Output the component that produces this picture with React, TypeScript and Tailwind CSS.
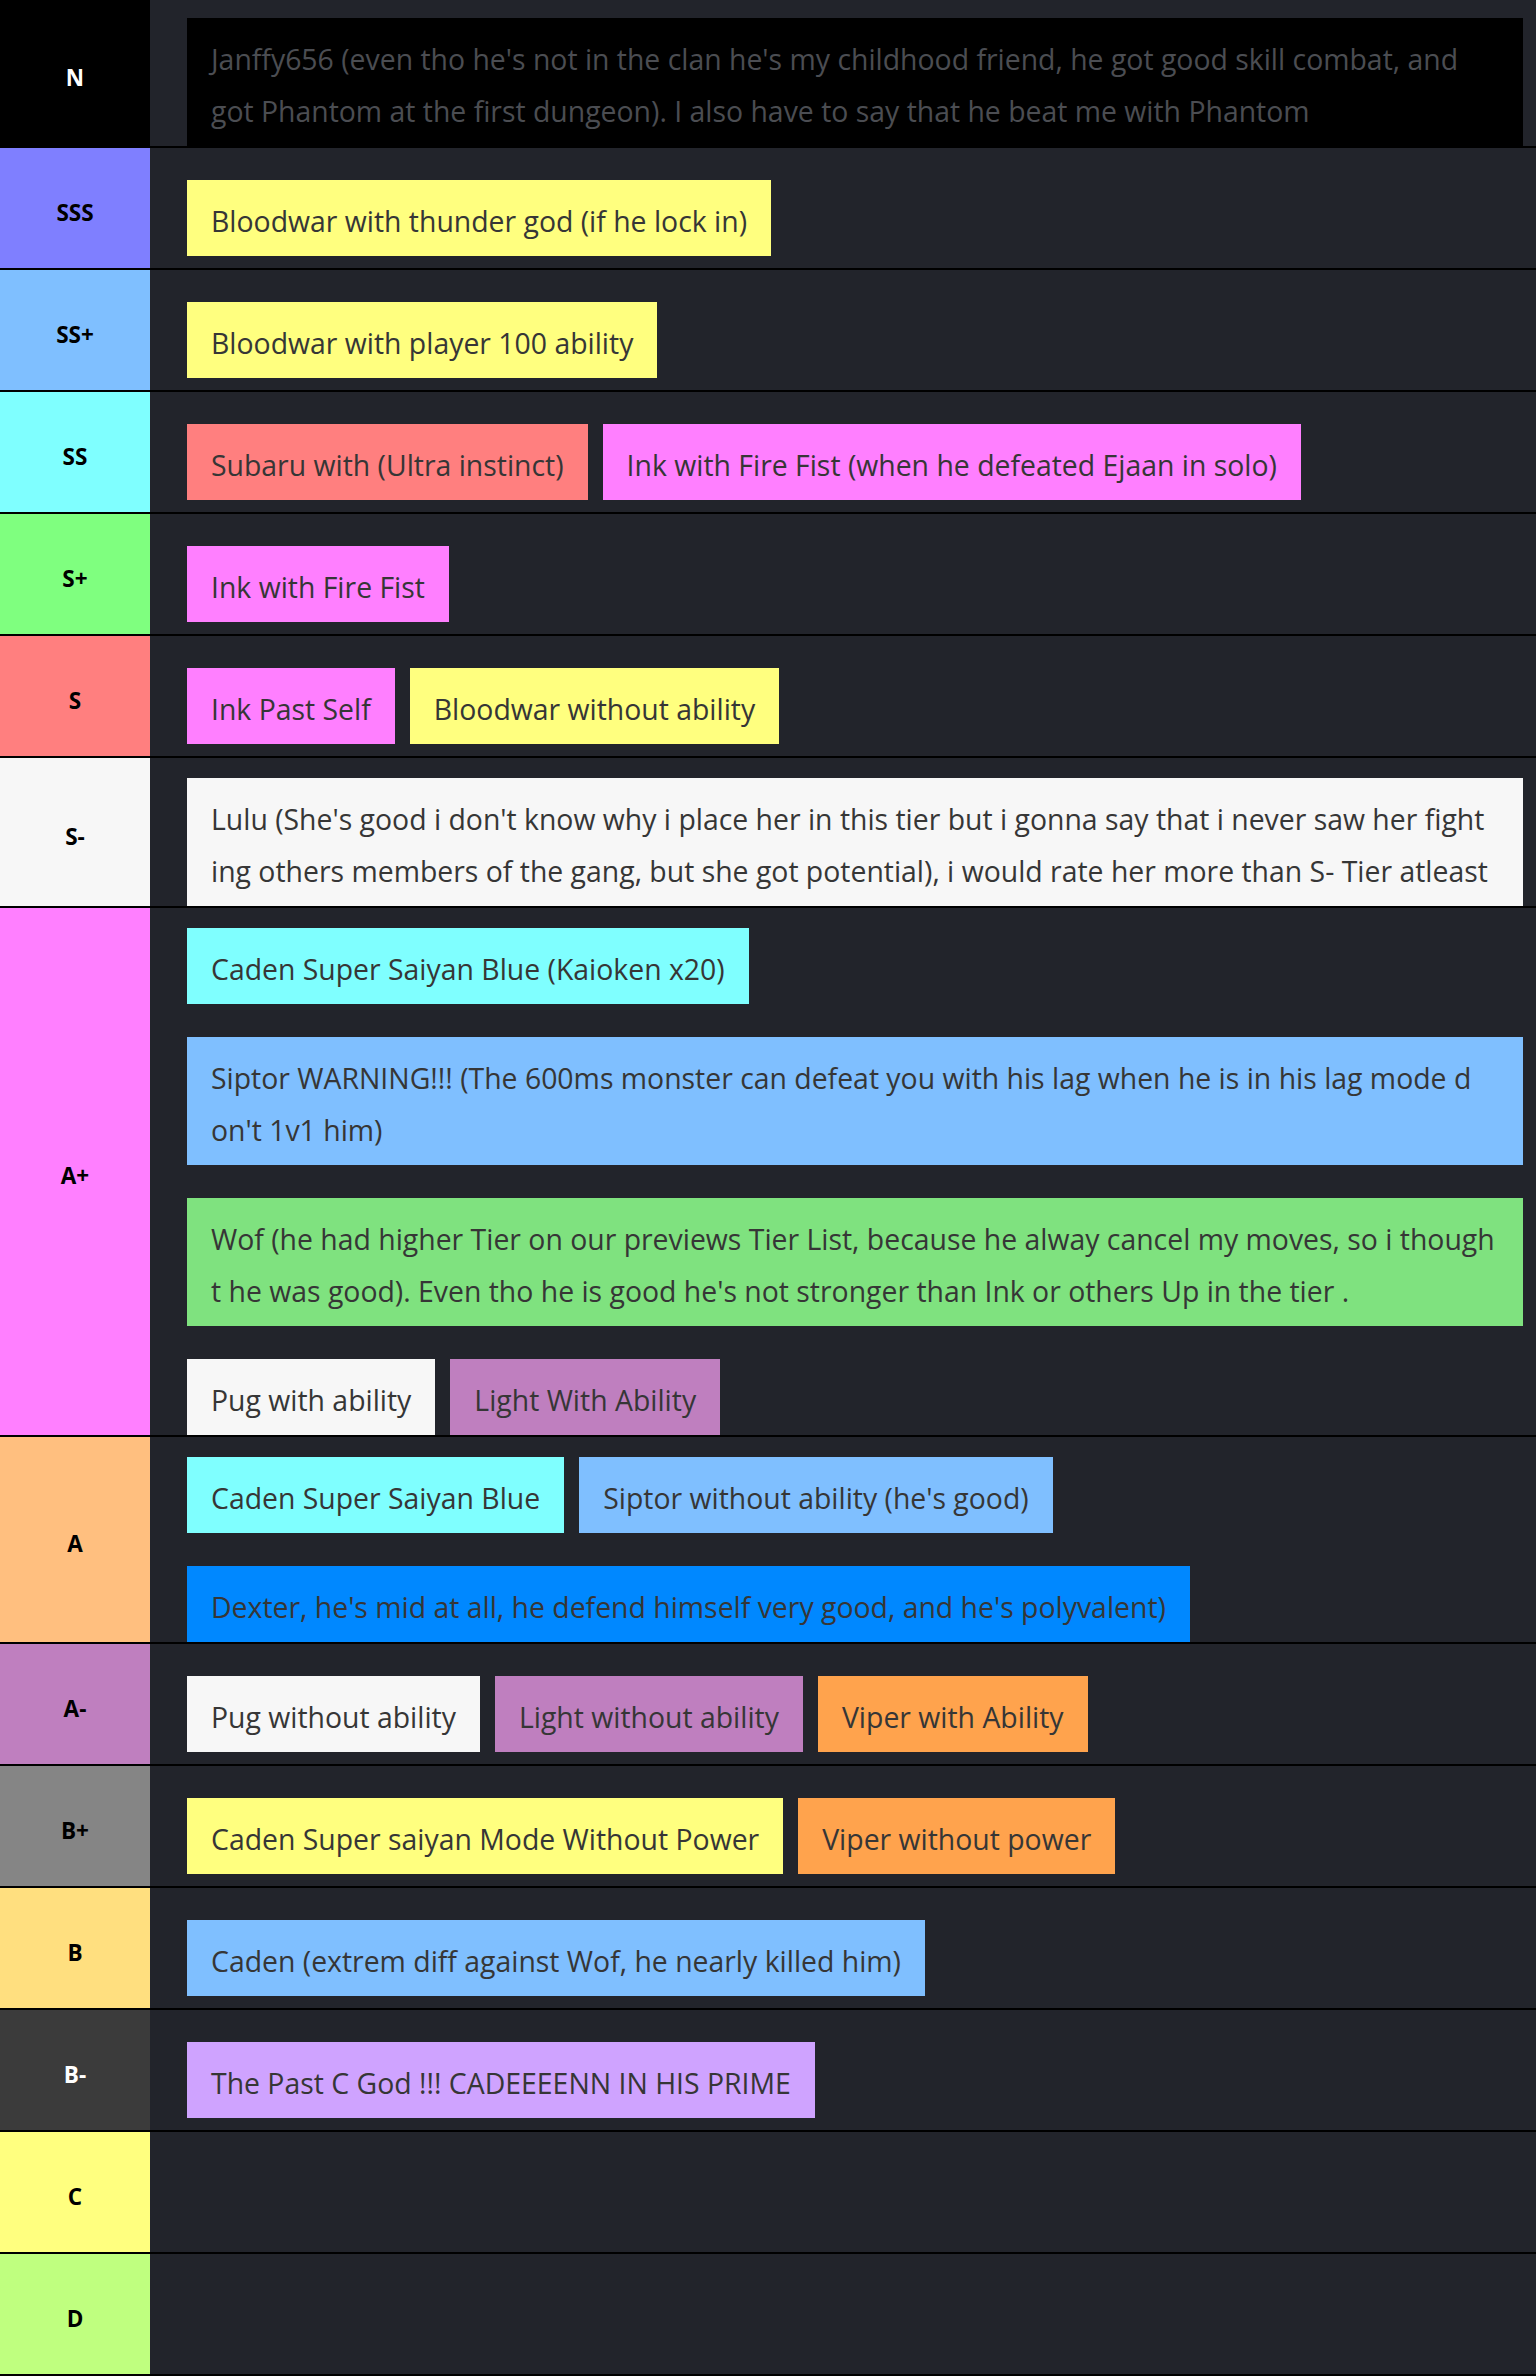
import React from "react";

type Item = { lines: string[]; bg: string; full?: boolean; text?: string };
type Row = { label: string; labelBg: string; labelText: string; items: Item[]; top?: string };

const Y = "bg-[#ffff7f]";
const PINK = "bg-[#ff7fff]";
const CYAN = "bg-[#7fffff]";
const BLUE = "bg-[#7fbfff]";
const WHITE = "bg-[#f7f7f7]";
const PURPLE = "bg-[#bf7fbf]";
const ORANGE = "bg-[#ffa34d]";

const rows: Row[] = [
  {
    label: "N",
    labelBg: "bg-[#000000]",
    labelText: "text-white",
    top: "pt-[18px]",
    items: [
      {
        lines: [
          "Janffy656 (even tho he's not in the clan he's my childhood friend, he got good skill combat, and",
          "got Phantom at the first dungeon). I also have to say that he beat me with Phantom",
        ],
        bg: "bg-[#000000]",
        full: true,
        text: "text-[#4b4d52]",
      },
    ],
  },
  { label: "SSS", labelBg: "bg-[#7f7fff]", labelText: "text-black", items: [{ lines: ["Bloodwar with thunder god (if he lock in)"], bg: Y }] },
  { label: "SS+", labelBg: "bg-[#7fbfff]", labelText: "text-black", items: [{ lines: ["Bloodwar with player 100 ability"], bg: Y }] },
  {
    label: "SS",
    labelBg: "bg-[#7fffff]",
    labelText: "text-black",
    items: [
      { lines: ["Subaru with (Ultra instinct)"], bg: "bg-[#ff7f7f]" },
      { lines: ["Ink with Fire Fist (when he defeated Ejaan in solo)"], bg: PINK },
    ],
  },
  { label: "S+", labelBg: "bg-[#7fff7f]", labelText: "text-black", items: [{ lines: ["Ink with Fire Fist"], bg: PINK }] },
  {
    label: "S",
    labelBg: "bg-[#ff7f7f]",
    labelText: "text-black",
    items: [
      { lines: ["Ink Past Self"], bg: PINK },
      { lines: ["Bloodwar without ability"], bg: Y },
    ],
  },
  {
    label: "S-",
    labelBg: "bg-[#f7f7f7]",
    labelText: "text-black",
    items: [
      {
        lines: [
          "Lulu (She's good i don't know why i place her in this tier but i gonna say that i never saw her fight",
          "ing others members of the gang, but she got potential), i would rate her more than S- Tier atleast",
        ],
        bg: WHITE,
        full: true,
      },
    ],
  },
  {
    label: "A+",
    labelBg: "bg-[#ff7fff]",
    labelText: "text-black",
    items: [
      { lines: ["Caden Super Saiyan Blue (Kaioken x20)"], bg: CYAN },
      {
        lines: [
          "Siptor WARNING!!! (The 600ms monster can defeat you with his lag when he is in his lag mode d",
          "on't 1v1 him)",
        ],
        bg: BLUE,
        full: true,
      },
      {
        lines: [
          "Wof (he had higher Tier on our previews Tier List, because he alway cancel my moves, so i though",
          "t he was good). Even tho he is good he's not stronger than Ink or others Up in the tier .",
        ],
        bg: "bg-[#7fe27f]",
        full: true,
      },
      { lines: ["Pug with ability"], bg: WHITE },
      { lines: ["Light With Ability"], bg: PURPLE },
    ],
  },
  {
    label: "A",
    labelBg: "bg-[#ffbf7f]",
    labelText: "text-black",
    items: [
      { lines: ["Caden Super Saiyan Blue"], bg: CYAN },
      { lines: ["Siptor without ability (he's good)"], bg: BLUE },
      { lines: ["Dexter, he's mid at all, he defend himself very good, and he's polyvalent)"], bg: "bg-[#0088ff]" },
    ],
  },
  {
    label: "A-",
    labelBg: "bg-[#bf7fbf]",
    labelText: "text-black",
    items: [
      { lines: ["Pug without ability"], bg: WHITE },
      { lines: ["Light without ability"], bg: PURPLE },
      { lines: ["Viper with Ability"], bg: ORANGE },
    ],
  },
  {
    label: "B+",
    labelBg: "bg-[#858585]",
    labelText: "text-black",
    items: [
      { lines: ["Caden Super saiyan Mode Without Power"], bg: Y },
      { lines: ["Viper without power"], bg: ORANGE },
    ],
  },
  {
    label: "B",
    labelBg: "bg-[#ffdf7f]",
    labelText: "text-black",
    items: [{ lines: ["Caden (extrem diff against Wof, he nearly killed him)"], bg: BLUE }],
  },
  {
    label: "B-",
    labelBg: "bg-[#3b3b3b]",
    labelText: "text-white",
    items: [{ lines: ["The Past C God !!! CADEEEENN IN HIS PRIME"], bg: "bg-[#cfa3ff]" }],
  },
  { label: "C", labelBg: "bg-[#ffff7f]", labelText: "text-black", items: [] },
  { label: "D", labelBg: "bg-[#bfff7f]", labelText: "text-black", items: [] },
];

function TierItem({ item }: { item: Item }) {
  return (
    <div
      className={`${item.bg} ${item.full ? "w-full min-w-0" : ""} ${item.text ?? "text-[#363636]"} px-6 pt-[15px] pb-[9px] text-[28.4px] leading-[52px]`}
    >
      {item.lines.map((l, i) => (
        <div key={i} className="whitespace-nowrap">
          {l}
        </div>
      ))}
    </div>
  );
}

export default function App() {
  return (
    <div className="w-[1536px] bg-[#22242b] font-['Open_Sans',sans-serif]">
      {rows.map((row) => (
        <div key={row.label} className="flex border-b-2 border-black">
          <div
            className={`${row.labelBg} ${row.labelText} w-[150px] shrink-0 flex items-center justify-center pt-[9px] text-[22.5px] font-bold`}
          >
            {row.label}
          </div>
          <div
            className={`flex-1 min-w-0 min-h-[120px] flex flex-wrap content-center gap-x-[15px] gap-y-[33px] pl-[37px] pr-[13px] ${row.top ?? "pt-[20px]"}`}
          >
            {row.items.map((it, i) => (
              <TierItem key={i} item={it} />
            ))}
          </div>
        </div>
      ))}
    </div>
  );
}
